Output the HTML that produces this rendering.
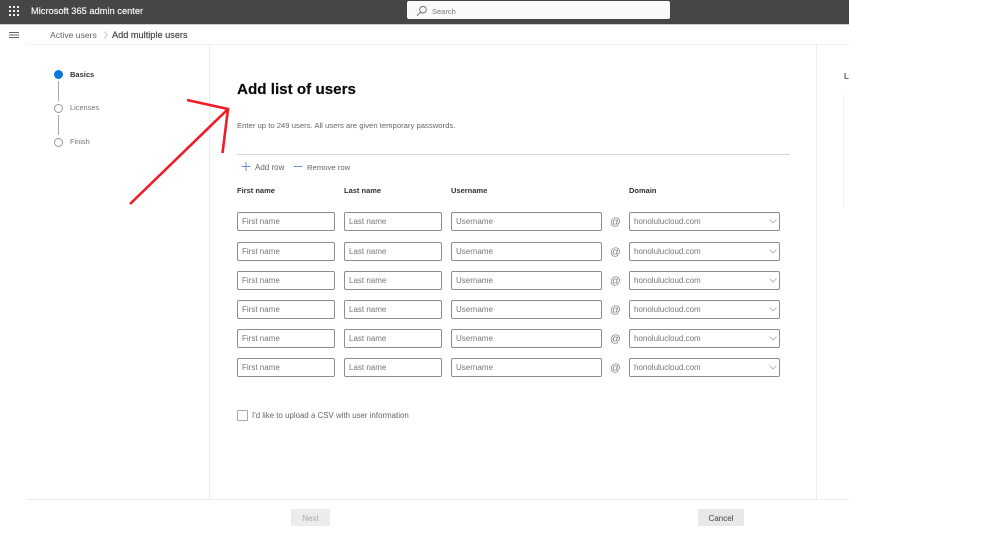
<!DOCTYPE html>
<html>
<head>
<meta charset="utf-8">
<style>
html,body{margin:0;padding:0;background:#fff;}
body{width:1000px;height:535px;position:relative;overflow:hidden;font-family:"Liberation Sans",sans-serif;font-size:7.7px;color:#605e5c;filter:blur(.3px);}
.a{position:absolute;}
.t{position:absolute;white-space:nowrap;line-height:12px;}
.box{position:absolute;height:17px;border:1px solid #8f8e8c;border-radius:2px;background:#fff;box-sizing:content-box;line-height:18px;padding-left:4px;color:#777;font-size:8px;white-space:nowrap;}
.h{position:absolute;white-space:nowrap;font-weight:bold;font-size:7.5px;color:#323130;line-height:12px;top:185px;}
.at{position:absolute;left:610px;font-size:10.5px;color:#777;line-height:12px;}
</style>
</head>
<body>
<div class="a" style="left:0;top:0;width:849px;height:24px;background:#474644;border-bottom:1px solid #cfcfcd;"></div>
<svg class="a" style="left:9px;top:6px" width="10" height="10" fill="#eee">
<rect x="0" y="0" width="2" height="2"/><rect x="4" y="0" width="2" height="2"/><rect x="8" y="0" width="2" height="2"/>
<rect x="0" y="4" width="2" height="2"/><rect x="4" y="4" width="2" height="2"/><rect x="8" y="4" width="2" height="2"/>
<rect x="0" y="8" width="2" height="2"/><rect x="4" y="8" width="2" height="2"/><rect x="8" y="8" width="2" height="2"/>
</svg>
<div class="t" style="left:31px;top:5px;color:#f2f2f2;font-size:9.3px;-webkit-text-stroke:.2px #f2f2f2;">Microsoft 365 admin center</div>
<div class="a" style="left:407px;top:1px;width:263px;height:18px;background:#fafafa;border-radius:2px;"></div>
<svg class="a" style="left:416px;top:5px" width="12" height="12" fill="none" stroke="#666" stroke-width=".9"><circle cx="7" cy="4.700" r="3.300"/><path d="M4.600 7.100 1 10.800"/></svg>
<div class="t" style="left:432px;top:6px;font-size:7.5px;color:#777;">Search</div>

<svg class="a" style="left:9px;top:32px" width="10" height="7" stroke="#666" stroke-width="1"><path d="M0 .5H10M0 3H10M0 5.500H10"/></svg>
<div class="t" style="left:50px;top:29px;font-size:8.6px;color:#666;">Active users</div>
<svg class="a" style="left:103px;top:31px" width="6" height="8" fill="none" stroke="#bbb" stroke-width=".8"><path d="M1 .5 4.500 4 1 7.500"/></svg>
<div class="t" style="left:112px;top:29px;font-size:9.2px;color:#444;-webkit-text-stroke:.15px #444;">Add multiple users</div>
<div class="a" style="left:27px;top:44px;width:822px;height:1px;background:#f0f0f0;"></div>

<div class="a" style="left:209px;top:45px;width:1px;height:454px;background:#ececec;"></div>
<div class="a" style="left:816px;top:45px;width:1px;height:454px;background:#ececec;"></div>
<div class="a" style="left:843px;top:95px;width:1px;height:113px;background:#f2f2f2;"></div>
<div class="t" style="left:844px;top:71px;font-size:8px;font-weight:bold;color:#6b5a50;width:5px;overflow:hidden;">Le</div>
<div class="a" style="left:27px;top:499px;width:822px;height:1px;background:#ececec;"></div>

<div class="a" style="left:54px;top:70px;width:9px;height:9px;border-radius:50%;background:#0b78d7;"></div>
<div class="a" style="left:58px;top:81px;width:1px;height:20px;background:#aaa;"></div>
<div class="a" style="left:54px;top:104px;width:7px;height:7px;border-radius:50%;border:1px solid #999;"></div>
<div class="a" style="left:58px;top:115px;width:1px;height:20px;background:#aaa;"></div>
<div class="a" style="left:54px;top:138px;width:7px;height:7px;border-radius:50%;border:1px solid #999;"></div>
<div class="t" style="left:70px;top:69px;font-weight:bold;color:#323130;font-size:7.5px;">Basics</div>
<div class="t" style="left:70px;top:102px;color:#777;font-size:7.4px;">Licenses</div>
<div class="t" style="left:70px;top:136px;color:#777;font-size:7.4px;">Finish</div>

<div class="t" style="left:237px;top:80px;font-size:15.2px;line-height:20px;font-weight:bold;color:#0a0a0a;-webkit-text-stroke:.15px #0a0a0a;">Add list of users</div>
<div class="t" style="left:237px;top:120px;color:#666;">Enter up to 249 users. All users are given temporary passwords.</div>
<div class="a" style="left:237px;top:154px;width:553px;height:1px;background:#d8d8d8;"></div>

<svg class="a" style="left:241px;top:162px" width="10" height="10" stroke="#6a8fd8" stroke-width="1"><path d="M5 0V9M.5 4.500H9.500"/></svg>
<div class="t" style="left:255px;top:162px;color:#666;font-size:8px;">Add row</div>
<svg class="a" style="left:293px;top:162px" width="10" height="10" stroke="#6a8fd8" stroke-width="1"><path d="M.5 4.500H9.500"/></svg>
<div class="t" style="left:307px;top:162px;color:#666;">Remove row</div>

<div class="h" style="left:237px;">First name</div>
<div class="h" style="left:344px;">Last name</div>
<div class="h" style="left:451px;">Username</div>
<div class="h" style="left:629px;">Domain</div>

<div class="box" style="left:237px;top:212px;width:92px;">First name</div><div class="box" style="left:344px;top:212px;width:92px;">Last name</div><div class="box" style="left:451px;top:212px;width:145px;">Username</div><div class="at" style="top:216px;">@</div><div class="box" style="left:629px;top:212px;width:145px;">honolulucloud.com</div>
<svg class="a" style="left:769px;top:219px" width="8" height="5" fill="none" stroke="#aaa" stroke-width=".8"><path d="M.5 .5 4 4 7.500 .5"/></svg>

<div class="box" style="left:237px;top:242px;width:92px;">First name</div><div class="box" style="left:344px;top:242px;width:92px;">Last name</div><div class="box" style="left:451px;top:242px;width:145px;">Username</div><div class="at" style="top:246px;">@</div><div class="box" style="left:629px;top:242px;width:145px;">honolulucloud.com</div>
<svg class="a" style="left:769px;top:249px" width="8" height="5" fill="none" stroke="#aaa" stroke-width=".8"><path d="M.5 .5 4 4 7.500 .5"/></svg>

<div class="box" style="left:237px;top:271px;width:92px;">First name</div><div class="box" style="left:344px;top:271px;width:92px;">Last name</div><div class="box" style="left:451px;top:271px;width:145px;">Username</div><div class="at" style="top:275px;">@</div><div class="box" style="left:629px;top:271px;width:145px;">honolulucloud.com</div>
<svg class="a" style="left:769px;top:278px" width="8" height="5" fill="none" stroke="#aaa" stroke-width=".8"><path d="M.5 .5 4 4 7.500 .5"/></svg>

<div class="box" style="left:237px;top:300px;width:92px;">First name</div><div class="box" style="left:344px;top:300px;width:92px;">Last name</div><div class="box" style="left:451px;top:300px;width:145px;">Username</div><div class="at" style="top:304px;">@</div><div class="box" style="left:629px;top:300px;width:145px;">honolulucloud.com</div>
<svg class="a" style="left:769px;top:307px" width="8" height="5" fill="none" stroke="#aaa" stroke-width=".8"><path d="M.5 .5 4 4 7.500 .5"/></svg>

<div class="box" style="left:237px;top:329px;width:92px;">First name</div><div class="box" style="left:344px;top:329px;width:92px;">Last name</div><div class="box" style="left:451px;top:329px;width:145px;">Username</div><div class="at" style="top:333px;">@</div><div class="box" style="left:629px;top:329px;width:145px;">honolulucloud.com</div>
<svg class="a" style="left:769px;top:336px" width="8" height="5" fill="none" stroke="#aaa" stroke-width=".8"><path d="M.5 .5 4 4 7.500 .5"/></svg>

<div class="box" style="left:237px;top:358px;width:92px;">First name</div><div class="box" style="left:344px;top:358px;width:92px;">Last name</div><div class="box" style="left:451px;top:358px;width:145px;">Username</div><div class="at" style="top:362px;">@</div><div class="box" style="left:629px;top:358px;width:145px;">honolulucloud.com</div>
<svg class="a" style="left:769px;top:365px" width="8" height="5" fill="none" stroke="#aaa" stroke-width=".8"><path d="M.5 .5 4 4 7.500 .5"/></svg>

<div class="a" style="left:237px;top:410px;width:9px;height:9px;border:1px solid #aaa;border-radius:1px;"></div>
<div class="t" style="left:252px;top:410px;color:#666;font-size:7.9px;">I'd like to upload a CSV with user information</div>

<div class="a" style="left:291px;top:509px;width:39px;height:17px;background:#ececec;color:#aaa;text-align:center;line-height:19px;font-size:8px;">Next</div>
<div class="a" style="left:698px;top:509px;width:46px;height:17px;background:#e8e8e8;color:#444;text-align:center;line-height:19px;font-size:8px;">Cancel</div>

<svg class="a" style="left:0;top:0" width="1000" height="535" fill="none" stroke="#ee1c25" stroke-width="2.600"><path d="M130 204 228 109M187 100 228 109 222.500 153"/></svg>
</body>
</html>
